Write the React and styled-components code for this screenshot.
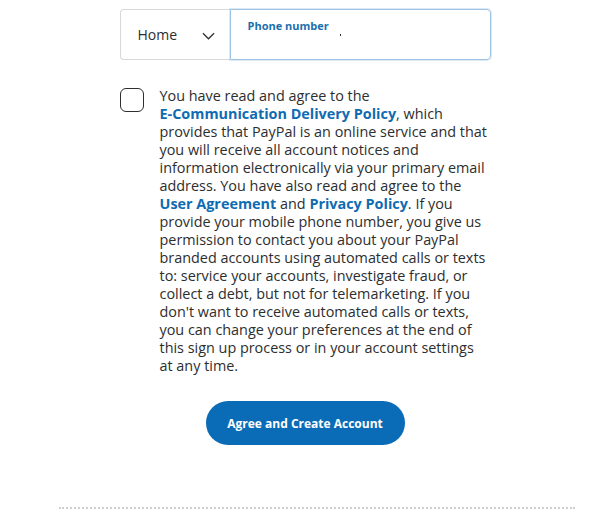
import styled, { createGlobalStyle } from "styled-components";

const GlobalStyle = createGlobalStyle`
  body {
    margin: 0;
    background: #ffffff;
    font-family: "Open Sans", "Liberation Sans", sans-serif;
    color: #2c2e2f;
  }
`;

const App = () => {
  return (
    <Page>
      <GlobalStyle />
      <Form>
        <PhoneGroup>
          <SelectBox>
            <span>Home</span>
            <Chevron viewBox="0 0 14 8">
              <path d="M1 1l6 6 6-6" fill="none" stroke="#2c2e2f" strokeWidth="1.3" />
            </Chevron>
          </SelectBox>
          <PhoneField>
            <FieldLabel>Phone number</FieldLabel>
            <Caret />
          </PhoneField>
        </PhoneGroup>
        <Consent>
          <Checkbox />
          <Legal>
            You have read and agree to the <Link nowrap>E-Communication Delivery Policy</Link>,
            which provides that PayPal is an online service and that you will receive all
            account notices and information electronically via your primary email address.
            You have also read and agree to the <Link>User Agreement</Link> and{" "}
            <Link>Privacy Policy</Link>. If you provide your mobile phone number, you give
            us permission to contact you about your PayPal branded accounts using automated
            calls or texts to: service your accounts, investigate fraud, or collect a debt,
            but not for telemarketing. If you don't want to receive automated calls or
            texts, you can change your preferences at the end of this sign up process or in
            your account settings at any time.
          </Legal>
        </Consent>
        <Actions>
          <PrimaryButton>Agree and Create Account</PrimaryButton>
        </Actions>
      </Form>
      <Divider />
    </Page>
  );
};

export default App;

const Page = styled.div`
  width: 610px;
  height: 514px;
  display: flex;
  flex-direction: column;
  align-items: center;
  overflow: hidden;
`;

const Form = styled.div`
  width: 371px;
  margin-top: 9px;
  display: flex;
  flex-direction: column;
`;

const PhoneGroup = styled.div`
  display: flex;
  height: 51px;
`;

const SelectBox = styled.div`
  width: 110px;
  box-sizing: border-box;
  border: 1px solid #d6d9dc;
  border-right: none;
  border-radius: 4px 0 0 4px;
  display: flex;
  align-items: center;
  justify-content: space-between;
  padding: 0 15px 0 17px;
  font-size: 14px;
  color: #2c2e2f;
`;

const Chevron = styled.svg`
  width: 13px;
  height: 8px;
  margin-top: 2px;
`;

const PhoneField = styled.div`
  flex: 1;
  position: relative;
  box-sizing: border-box;
  border: 1px solid #9dc3e6;
  border-radius: 0 4px 4px 0;
  box-shadow: 0 0 0 1px rgba(157, 195, 230, 0.35);
  padding: 8px 17px;
`;

const FieldLabel = styled.div`
  font-size: 11px;
  font-weight: 700;
  color: #1b6fae;
  line-height: 16px;
`;

const Caret = styled.span`
  position: absolute;
  left: 109px;
  top: 24px;
  width: 1px;
  height: 2px;
  background: #2c2e2f;
`;

const Consent = styled.div`
  display: flex;
  gap: 16px;
  margin-top: 27px;
`;

const Checkbox = styled.div`
  flex: none;
  width: 24px;
  height: 24px;
  box-sizing: border-box;
  border: 1px solid #2c2e2f;
  border-radius: 6px;
  margin-top: 1px;
`;

const Legal = styled.p`
  margin: 0;
  width: 331px;
  font-size: 14.4px;
  line-height: 18px;
  color: #2c2e2f;
`;

const Link = styled.a.withConfig({ shouldForwardProp: (p) => p !== "nowrap" })`
  color: #0f6bb2;
  font-weight: 700;
  text-decoration: none;
  white-space: ${({ nowrap }) => (nowrap ? "nowrap" : "normal")};
`;

const Actions = styled.div`
  display: flex;
  justify-content: center;
  margin-top: 26px;
`;

const PrimaryButton = styled.button`
  width: 199px;
  height: 44px;
  border: none;
  border-radius: 22px;
  background: #0a6cb6;
  color: #ffffff;
  font-family: "Open Sans", "Liberation Sans", sans-serif;
  font-size: 12px;
  font-weight: 700;
`;

const Divider = styled.div`
  width: 516px;
  margin-top: 62px;
  margin-left: 23px;
  border-top: 2px dotted #cfcfcf;
`;
